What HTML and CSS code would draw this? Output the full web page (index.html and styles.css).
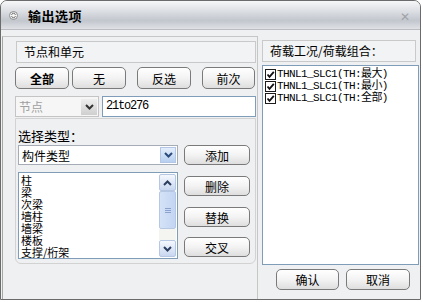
FILE: index.html
```html
<!DOCTYPE html>
<html lang="zh">
<head>
    <meta charset="UTF-8">
    <title>输出选项</title>
    <link rel="stylesheet" href="styles.css">
</head>
<body>
    <div class="window">
        <div class="titlebar">
            <svg class="title-icon" width="9" height="9" viewBox="0 0 9 9">
                <circle cx="4.5" cy="4.5" r="4" fill="#f4f4f4" stroke="#8a8a8a"/>
                <path d="M2.5 3.8 L4.5 1.8 L6.5 3.8 M2.5 5.2 L4.5 7.2 L6.5 5.2" fill="none" stroke="#555" stroke-width="1"/>
            </svg>
            <span class="title">输出选项</span>
            <span class="close">✕</span>
        </div>
        <div class="content">
            <div class="left">
                <div class="caption">节点和单元</div>
                <div class="btn-row">
                    <button class="btn bold w54">全部</button>
                    <button class="btn w54 gap3">无</button>
                    <button class="btn w54 gap11">反选</button>
                    <button class="btn w53 gap11">前次</button>
                </div>
                <div class="pick-row">
                    <div class="select disabled w84">
                        <span>节点</span>
                        <span class="drop">
                            <svg width="9" height="6" viewBox="0 0 9 6"><path d="M1 1 L4.5 4.5 L8 1" fill="none" stroke="#333" stroke-width="2"/></svg>
                        </span>
                    </div>
                    <div class="field">21to276</div>
                </div>
                <div class="group">
                    <div class="label">选择类型：</div>
                    <div class="type-row">
                        <div class="type-col">
                            <div class="select w160">
                                <span>构件类型</span>
                                <span class="drop blue">
                                    <svg width="9" height="6" viewBox="0 0 9 6"><path d="M1 1 L4.5 4.5 L8 1" fill="none" stroke="#2c4a7c" stroke-width="2"/></svg>
                                </span>
                            </div>
                            <div class="listbox">
                                <ul class="items">
                                    <li>柱</li>
                                    <li>梁</li>
                                    <li>次梁</li>
                                    <li>墙柱</li>
                                    <li>墙梁</li>
                                    <li>楼板</li>
                                    <li>支撑/桁架</li>
                                </ul>
                                <div class="scrollbar">
                                    <span class="arrow">
                                        <svg width="9" height="6" viewBox="0 0 9 6"><path d="M1 5 L4.5 1.5 L8 5" fill="none" stroke="#2c3e60" stroke-width="2"/></svg>
                                    </span>
                                    <span class="thumb"><i></i><i></i><i></i></span>
                                    <span class="track"></span>
                                    <span class="arrow">
                                        <svg width="9" height="6" viewBox="0 0 9 6"><path d="M1 1 L4.5 4.5 L8 1" fill="none" stroke="#2c3e60" stroke-width="2"/></svg>
                                    </span>
                                </div>
                            </div>
                        </div>
                        <div class="side-btns">
                            <button class="btn w66">添加</button>
                            <button class="btn w66 mt-add">删除</button>
                            <button class="btn w66 mt-10">替换</button>
                            <button class="btn w66 mt-9">交叉</button>
                        </div>
                    </div>
                </div>
            </div>
            <div class="right">
                <div class="caption">荷载工况/荷载组合：</div>
                <div class="checklist">
                    <label class="check"><span class="box"><svg width="9" height="9" viewBox="0 0 9 9"><path d="M1.5 4.5 L3.5 6.8 L7.8 1.8" fill="none" stroke="#111" stroke-width="1.8"/></svg></span>THNL1_SLC1(TH:最大)</label>
                    <label class="check"><span class="box"><svg width="9" height="9" viewBox="0 0 9 9"><path d="M1.5 4.5 L3.5 6.8 L7.8 1.8" fill="none" stroke="#111" stroke-width="1.8"/></svg></span>THNL1_SLC1(TH:最小)</label>
                    <label class="check"><span class="box"><svg width="9" height="9" viewBox="0 0 9 9"><path d="M1.5 4.5 L3.5 6.8 L7.8 1.8" fill="none" stroke="#111" stroke-width="1.8"/></svg></span>THNL1_SLC1(TH:全部)</label>
                </div>
                <div class="footer">
                    <button class="btn w63">确认</button>
                    <button class="btn w64">取消</button>
                </div>
            </div>
        </div>
    </div>
</body>
</html>
```

FILE: styles.css
```css
body {
    margin: 0;
    font-family: "Noto Sans CJK SC", "Liberation Sans", sans-serif;
    font-size: 12px;
    color: #000;
    background: #fff;
}
.window {
    width: 419px;
    height: 298px;
    border: 1px solid #6b6b6b;
    border-radius: 7px 7px 0 0;
    background: #eff0f2;
    overflow: hidden;
}
.titlebar {
    height: 28px;
    display: flex;
    align-items: center;
    padding: 0 10px 0 8px;
    border-bottom: 1px solid #b9bcc2;
    background: linear-gradient(#f6f7f8, #d9dce1 40%, #c2c6cd 70%, #dfe1e5);
}
.title-icon {
    margin-right: 10px;
}
.title {
    font-size: 13px;
    font-weight: bold;
    letter-spacing: 0.5px;
    flex: 1;
}
.close {
    color: #a0a3a8;
    font-size: 12px;
}
.content {
    display: flex;
    height: 270px;
}
.left {
    width: 256px;
    margin-left: 1px;
    margin-top: 6px;
    border-left: 1px solid #a7a7a7;
    border-right: 1px solid #c6c6c6;
    border-top: 1px solid #c6c6c6;
    padding: 4px 0 0 12px;
    box-sizing: border-box;
    height: 264px;
}
.caption {
    height: 20px;
    line-height: 20px;
    border: 1px solid #c9c9c9;
    background: #f2f3f4;
    padding-left: 7px;
    width: 231px;
    margin-left: 1px;
}
.btn-row {
    display: flex;
    margin-top: 4px;
}
.btn {
    height: 22px;
    padding: 0;
    font-family: inherit;
    font-size: 12px;
    color: #000;
    border: 1px solid #7a7a7a;
    border-radius: 5px;
    background: linear-gradient(#ffffff, #f3f3f3 50%, #dedede);
}
.bold { font-weight: bold; }
.w53 { width: 53px; }
.w54 { width: 54px; }
.w63 { width: 63px; }
.w64 { width: 64px; }
.w66 { width: 66px; height: 20px; }
.gap3 { margin-left: 3px; }
.gap11 { margin-left: 11px; }
.pick-row {
    display: flex;
    margin-top: 7px;
    height: 21px;
}
.select {
    display: flex;
    align-items: center;
    justify-content: space-between;
    border: 1px solid #a5acb5;
    background: #fff;
    padding-left: 3px;
    box-sizing: border-box;
    height: 20px;
}
.disabled {
    color: #a0a0a0;
    border-color: #c4c4c4;
    background: #f6f6f6;
}
.w84 { width: 84px; height: 21px; }
.w160 { width: 160px; }
.drop {
    width: 16px;
    height: 16px;
    margin-right: 1px;
    display: flex;
    align-items: center;
    justify-content: center;
    background: linear-gradient(#eeeeee, #cfcfcf);
}
.drop.blue {
    background: linear-gradient(#e4eefb, #b8cff0);
    border: 1px solid #b3c6e6;
    box-sizing: border-box;
}
.field {
    margin-left: 3px;
    width: 154px;
    height: 21px;
    box-sizing: border-box;
    border: 1px solid #7f9db9;
    background: #fff;
    padding-left: 3px;
    line-height: 19px;
    font-family: "Liberation Mono", monospace;
    letter-spacing: -1.2px;
}
.group {
    margin-top: 1px;
    width: 241px;
    height: 146px;
    box-sizing: border-box;
    border: 1px solid #d2d2d2;
    border-radius: 0 0 6px 6px;
    padding: 7px 0 0 2px;
}
.label {
    font-size: 13px;
    height: 19px;
}
.type-row {
    display: flex;
}
.type-col {
    width: 160px;
}
.listbox {
    margin-top: 7px;
    height: 87px;
    box-sizing: border-box;
    border: 1px solid #7f9db9;
    background: #fff;
    display: flex;
}
.items {
    list-style: none;
    margin: 0;
    padding: 1px 0 0 2px;
    flex: 1;
    line-height: 12px;
    font-size: 11px;
}
.items li {
    height: 12px;
}
.scrollbar {
    width: 17px;
    display: flex;
    flex-direction: column;
    margin: 1px 1px 1px 0;
}
.arrow {
    height: 17px;
    display: flex;
    align-items: center;
    justify-content: center;
    border: 1px solid #b6c7e3;
    border-radius: 2px;
    box-sizing: border-box;
    background: linear-gradient(#f5f8fd, #c8d7f0);
}
.thumb {
    height: 38px;
    display: flex;
    flex-direction: column;
    align-items: center;
    justify-content: center;
    gap: 1px;
    border: 1px solid #b6c7e3;
    border-radius: 2px;
    box-sizing: border-box;
    background: linear-gradient(90deg, #d5e2f7, #c3d5f3);
}
.thumb i {
    width: 6px;
    height: 1px;
    background: #8aa2cc;
}
.track {
    flex: 1;
    background: #f4f4f0;
}
.side-btns {
    display: flex;
    flex-direction: column;
    margin-left: 6px;
}
.mt-add { margin-top: 11px; }
.mt-10 { margin-top: 11px; }
.mt-9 { margin-top: 10px; }
.right {
    width: 157px;
    margin-left: 4px;
    margin-top: 10px;
}
.right .caption {
    width: 145px;
    margin-left: 0;
}
.checklist {
    margin-top: 3px;
    height: 200px;
    box-sizing: border-box;
    border: 1px solid #7f9db9;
    background: #fff;
    padding: 2px 0 0 2px;
    display: flex;
    flex-direction: column;
}
.check {
    display: flex;
    align-items: center;
    height: 12px;
    line-height: 12px;
    font-size: 11px;
    font-family: "Liberation Mono", "Noto Sans CJK SC", monospace;
    letter-spacing: -0.6px;
}
.box {
    width: 9px;
    height: 9px;
    border: 1px solid #1c1c1c;
    background: #fff;
    display: flex;
    margin-right: 1px;
}
.footer {
    display: flex;
    margin-top: 4px;
    margin-left: 14px;
    gap: 7px;
}
.footer .btn {
    height: 21px;
}
```
